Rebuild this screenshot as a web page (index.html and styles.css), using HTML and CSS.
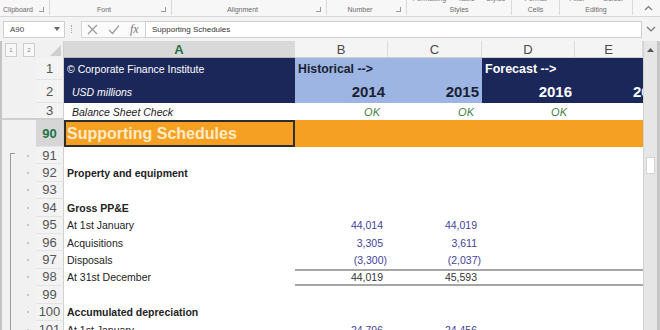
FILE: index.html
```html
<!DOCTYPE html>
<html lang="en">
<head>
    <meta charset="UTF-8">
    <title>Supporting Schedules - Excel</title>
    <link rel="stylesheet" href="styles.css">
</head>
<body>
    <div class="ribbon">
        <div class="group g-clip">
            <div class="cut"></div>
            <div class="glabel"><span>Clipboard</span><i class="launch"></i></div>
        </div>
        <div class="group g-font">
            <div class="cut"></div>
            <div class="glabel"><span>Font</span><i class="launch"></i></div>
        </div>
        <div class="group g-align">
            <div class="cut"></div>
            <div class="glabel"><span>Alignment</span><i class="launch"></i></div>
        </div>
        <div class="group g-num">
            <div class="cut"></div>
            <div class="glabel"><span>Number</span><i class="launch"></i></div>
        </div>
        <div class="group g-styles">
            <div class="cut"><span>Formatting</span><span>Table</span><span>Styles</span></div>
            <div class="glabel"><span>Styles</span></div>
        </div>
        <div class="group g-cells">
            <div class="cut"><span>Format</span></div>
            <div class="glabel"><span>Cells</span></div>
        </div>
        <div class="group g-edit">
            <div class="cut"><span>Filter</span><span>Select</span></div>
            <div class="glabel"><span>Editing</span></div>
        </div>
        <div class="collapse">
            <svg width="9" height="6" viewBox="0 0 9 6"><polyline points="1,5 4.5,1.5 8,5" fill="none" stroke="#777" stroke-width="1.2"/></svg>
        </div>
    </div>

    <div class="formula-bar">
        <div class="namebox">
            <span>A90</span>
            <svg width="6" height="4" viewBox="0 0 6 4"><polygon points="0,0 6,0 3,4" fill="#666"/></svg>
        </div>
        <div class="grip"></div>
        <div class="fx-tools">
            <svg width="11" height="11" viewBox="0 0 11 11"><path d="M1 1 L10 10 M10 1 L1 10" stroke="#9a9a9a" stroke-width="1.2"/></svg>
            <svg width="12" height="11" viewBox="0 0 12 11"><polyline points="1,6 4.5,9.5 11,1.5" fill="none" stroke="#9a9a9a" stroke-width="1.2"/></svg>
            <span class="fx">fx</span>
        </div>
        <div class="formula-input">Supporting Schedules</div>
        <div class="expand">
            <svg width="10" height="6" viewBox="0 0 10 6"><polyline points="1,1 5,5 9,1" fill="none" stroke="#777" stroke-width="1.2"/></svg>
        </div>
    </div>

    <div class="sheet">
        <div class="grid">
            <div class="row colhead">
                <div class="levels"><span class="lvl">1</span><span class="lvl">2</span></div>
                <div class="corner">
                    <svg width="11" height="11" viewBox="0 0 11 11"><polygon points="0,11 11,0 11,11" fill="#d0d0d0"/></svg>
                </div>
                <div class="ch sel">A</div>
                <div class="ch">B</div>
                <div class="ch">C</div>
                <div class="ch">D</div>
                <div class="ch">E</div>
            </div>

            <div class="row r1">
                <div class="gut"></div><div class="rh">1</div>
                <div class="c navy">© Corporate Finance Institute</div>
                <div class="c sky span2 head">Historical --&gt;</div>
                <div class="c navy span2 head">Forecast --&gt;</div>
            </div>
            <div class="row r2">
                <div class="gut"></div><div class="rh">2</div>
                <div class="c navy it indent">USD millions</div>
                <div class="c sky year">2014</div>
                <div class="c sky year">2015</div>
                <div class="c navy year">2016</div>
                <div class="c navy year cut-e">2017</div>
            </div>
            <div class="row r3">
                <div class="gut"></div><div class="rh">3</div>
                <div class="c it indent">Balance Sheet Check</div>
                <div class="c ok">OK</div>
                <div class="c ok">OK</div>
                <div class="c ok">OK</div>
                <div class="c"></div>
            </div>
            <div class="row r90">
                <div class="gut"></div><div class="rh active">90</div>
                <div class="c orange selected">Supporting Schedules</div>
                <div class="c orange"></div>
                <div class="c orange"></div>
                <div class="c orange"></div>
                <div class="c orange"></div>
            </div>

            <div class="row">
                <div class="gut dot bar-start"></div><div class="rh">91</div>
                <div class="c"></div><div class="c"></div><div class="c"></div><div class="c"></div><div class="c"></div>
            </div>
            <div class="row">
                <div class="gut dot bar"></div><div class="rh">92</div>
                <div class="c b">Property and equipment</div>
                <div class="c"></div><div class="c"></div><div class="c"></div><div class="c"></div>
            </div>
            <div class="row">
                <div class="gut dot bar"></div><div class="rh">93</div>
                <div class="c"></div><div class="c"></div><div class="c"></div><div class="c"></div><div class="c"></div>
            </div>
            <div class="row">
                <div class="gut dot bar"></div><div class="rh">94</div>
                <div class="c b">Gross PP&amp;E</div>
                <div class="c"></div><div class="c"></div><div class="c"></div><div class="c"></div>
            </div>
            <div class="row">
                <div class="gut dot bar"></div><div class="rh">95</div>
                <div class="c">At 1st January</div>
                <div class="c num input">44,014</div>
                <div class="c num input">44,019</div>
                <div class="c"></div><div class="c"></div>
            </div>
            <div class="row">
                <div class="gut dot bar"></div><div class="rh">96</div>
                <div class="c">Acquisitions</div>
                <div class="c num input">3,305</div>
                <div class="c num input">3,611</div>
                <div class="c"></div><div class="c"></div>
            </div>
            <div class="row">
                <div class="gut dot bar"></div><div class="rh">97</div>
                <div class="c">Disposals</div>
                <div class="c num input"><span class="neg">(3,300)</span></div>
                <div class="c num input"><span class="neg">(2,037)</span></div>
                <div class="c"></div><div class="c"></div>
            </div>
            <div class="row total">
                <div class="gut dot bar"></div><div class="rh">98</div>
                <div class="c">At 31st December</div>
                <div class="c num">44,019</div>
                <div class="c num">45,593</div>
                <div class="c"></div><div class="c"></div>
            </div>
            <div class="row">
                <div class="gut dot bar"></div><div class="rh">99</div>
                <div class="c"></div><div class="c"></div><div class="c"></div><div class="c"></div><div class="c"></div>
            </div>
            <div class="row">
                <div class="gut dot bar"></div><div class="rh">100</div>
                <div class="c b">Accumulated depreciation</div>
                <div class="c"></div><div class="c"></div><div class="c"></div><div class="c"></div>
            </div>
            <div class="row">
                <div class="gut dot bar"></div><div class="rh">101</div>
                <div class="c">At 1st January</div>
                <div class="c num input">24,796</div>
                <div class="c num input">24,456</div>
                <div class="c"></div><div class="c"></div>
            </div>
        </div>

        <div class="vscroll">
            <div class="sb-btn">
                <svg width="7" height="4" viewBox="0 0 7 4"><polygon points="0,4 3.5,0 7,4" fill="#555"/></svg>
            </div>
            <div class="sb-track"><div class="sb-thumb"></div></div>
        </div>
    </div>
</body>
</html>
```

FILE: styles.css
```css
* {
    box-sizing: border-box;
}
body {
    margin: 0;
    width: 660px;
    height: 330px;
    overflow: hidden;
    background-color: #f0f0f0;
    font-family: "Liberation Sans", Arial, sans-serif;
    color: #222;
}

/* ribbon group labels */
.ribbon {
    display: flex;
    height: 17px;
    background-color: #f7f7f7;
    border-bottom: 1px solid #d6d6d6;
}
.group {
    display: flex;
    flex-direction: column;
    height: 15px;
    border-right: 1px solid #d9d9d9;
}
.g-clip { width: 50px; }
.g-font { width: 122px; }
.g-align { width: 155px; }
.g-num { width: 80px; }
.g-styles { width: 105px; }
.g-cells { width: 48px; }
.g-edit { width: 73px; }
.cut {
    height: 3px;
    overflow: hidden;
    display: flex;
    align-items: flex-end;
    justify-content: space-around;
    font-size: 7px;
    color: #777;
}
.cut span {
    line-height: 8px;
}
.glabel {
    flex: 1;
    display: flex;
    align-items: center;
    font-size: 7px;
    color: #6b6b6b;
}
.glabel span {
    flex: 1;
    text-align: center;
}
.launch {
    width: 5px;
    height: 5px;
    margin: 0 5px 0 3px;
    border-right: 1px solid #999;
    border-bottom: 1px solid #999;
}
.collapse {
    flex: 1;
    display: flex;
    justify-content: flex-end;
    align-items: center;
    padding-right: 7px;
}

/* formula bar */
.formula-bar {
    display: flex;
    align-items: center;
    height: 24px;
    background-color: #f3f3f3;
}
.namebox {
    display: flex;
    align-items: center;
    justify-content: space-between;
    width: 62px;
    height: 17px;
    margin-left: 3px;
    padding: 0 4px 0 6px;
    background-color: white;
    border: 1px solid #cfcfcf;
    font-size: 8px;
    color: #444;
}
.grip {
    width: 1px;
    height: 8px;
    margin: 0 9px 0 6px;
    border-left: 1px dotted #aaa;
}
.fx-tools {
    display: flex;
    align-items: center;
    gap: 10px;
    width: 64px;
    height: 17px;
    padding-left: 5px;
    background-color: #fbfbfb;
    border: 1px solid #d6d6d6;
    border-right: none;
}
.fx {
    font-family: "Liberation Serif", serif;
    font-style: italic;
    font-size: 12px;
    color: #777;
}
.formula-input {
    display: flex;
    align-items: center;
    width: 497px;
    height: 17px;
    padding-left: 6px;
    background-color: white;
    border: 1px solid #cfcfcf;
    font-size: 8px;
    color: #333;
}
.expand {
    flex: 1;
    display: flex;
    justify-content: center;
}

/* sheet */
.sheet {
    display: flex;
    background-color: white;
}
.grid {
    width: 643px;
}
.row {
    display: grid;
    grid-template-columns: 36px 28px 231px 93px 94px 93px 68px;
    height: 17.4px;
}
.colhead { height: 17px; }
.r1 { height: 22px; }
.r2 { height: 23px; }
.r3 { height: 17px; }
.r90 { height: 27px; }

.levels {
    display: flex;
    align-items: center;
    gap: 6px;
    padding-left: 3px;
    background-color: #f1f1f1;
    border-left: 2px solid #c4c4c4;
}
.lvl {
    width: 12px;
    height: 14px;
    display: flex;
    align-items: center;
    justify-content: center;
    font-size: 6px;
    color: #888;
    background-color: #f8f8f8;
    border: 1px solid #cdcdcd;
}
.corner {
    display: flex;
    align-items: flex-end;
    justify-content: flex-end;
    padding: 0 2px 2px 0;
    background-color: #f1f1f1;
    border-right: 1px solid #d0d0d0;
}
.ch {
    display: flex;
    align-items: center;
    justify-content: center;
    background-color: #f4f4f4;
    border-right: 1px solid #dadada;
    border-bottom: 1px solid #cfcfcf;
    font-size: 13px;
    color: #4a4a4a;
}
.ch.sel {
    background-color: #d9d9d9;
    color: #217346;
    font-weight: bold;
    border-bottom: 1px solid #b8b8b8;
}

.gut {
    background-color: #f1f1f1;
    border-left: 2px solid #c4c4c4;
}
.rh {
    display: flex;
    align-items: center;
    justify-content: center;
    background-color: #f3f3f3;
    border-right: 1px solid #d0d0d0;
    border-bottom: 1px solid #e4e4e4;
    font-size: 13px;
    color: #555;
}
.rh.active {
    background-color: #d6d6d6;
    color: #217346;
    font-weight: bold;
}
.r3 .gut,
.r3 .rh {
    border-bottom: 2px solid #cfcfcf;
}
.dot {
    display: flex;
    align-items: center;
    padding-left: 25px;
}
.dot::after {
    content: "";
    width: 2px;
    height: 2px;
    background-color: #c6c6c6;
}
.bar {
    background-image: linear-gradient(#9c9c9c, #9c9c9c);
    background-size: 1px 100%;
    background-position: 8px 0;
    background-repeat: no-repeat;
}
.bar-start {
    background-image: linear-gradient(#9c9c9c, #9c9c9c), linear-gradient(#9c9c9c, #9c9c9c);
    background-size: 1px 12px, 5px 1px;
    background-position: 8px 6px, 8px 6px;
    background-repeat: no-repeat;
}

/* cells */
.c {
    display: flex;
    align-items: center;
    padding: 0 3px;
    white-space: nowrap;
    overflow: hidden;
    font-size: 10.5px;
    color: #222;
}
.span2 { grid-column: span 2; }
.navy {
    background-color: #1c2759;
    color: white;
}
.sky {
    background-color: #9db5e2;
    color: #1a1f33;
}
.head {
    font-weight: bold;
    font-size: 12.3px;
    padding-left: 3px;
}
.navy.head { font-size: 12.5px; }
.it { font-style: italic; }
.indent { padding-left: 8px; }
.year {
    justify-content: flex-end;
    padding-right: 3px;
    font-size: 15px;
    font-weight: bold;
}
.cut-e {
    justify-content: flex-start;
    padding-left: 58px;
}
.ok {
    justify-content: flex-end;
    padding-right: 8px;
    font-size: 11px;
    font-style: italic;
    color: #3f7f3f;
}
.orange {
    background-color: #f6a023;
}
.selected {
    font-size: 16px;
    font-weight: bold;
    color: #fdebc6;
    box-shadow: inset 0 0 0 2px #2d2d2d;
}
.b { font-weight: bold; }
.num {
    justify-content: flex-end;
    padding-right: 5px;
    color: #333;
}
.num.input { color: #43439a; }
.neg { margin-right: -4px; }
.total .c:nth-child(n+4) {
    border-top: 2px solid #a6a6a6;
    border-bottom: 2px solid #a6a6a6;
}

/* vertical scrollbar */
.vscroll {
    width: 17px;
    display: flex;
    flex-direction: column;
    height: 289px;
    background-color: #e6e6e6;
    border-left: 1px solid #d2d2d2;
    border-right: 3px solid #c6c6c6;
}
.sb-btn {
    height: 17px;
    display: flex;
    align-items: center;
    justify-content: center;
}
.sb-track {
    flex: 1;
    padding: 99px 0 0 2px;
}
.sb-thumb {
    width: 9px;
    height: 17px;
    background-color: white;
    border: 1px solid #d4d4d4;
}
```
